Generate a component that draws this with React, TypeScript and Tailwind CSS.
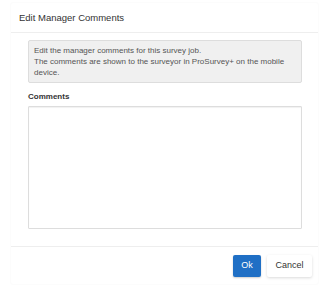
import React from "react";

const App = () => {
  return (
    <div className="w-[329px] h-[287px] bg-white pl-[10px] pt-[2px] font-['Liberation_Sans',Arial,sans-serif]">
      <div className="w-[309px] h-[283px] flex flex-col rounded-[3px] border border-[#fcfcfc]">
        {/* header */}
        <div className="h-[30px] shrink-0 flex items-center pl-[8px] border-b border-[#eeeeee]">
          <h2 className="text-[9.5px] text-[#333333] leading-none pt-[1px]">Edit Manager Comments</h2>
        </div>

        {/* body */}
        <div className="flex-1 flex flex-col pl-[17px] pr-[16px] pt-[7px]">
          <div className="border border-[#dddddd] bg-[#f0f0f0] rounded-[2px] px-[5px] pt-[4px] pb-[4px] text-[8px] leading-[11px] text-[#555555]">
            <p>Edit the manager comments for this survey job.</p>
            <p>The comments are shown to the surveyor in ProSurvey+ on the mobile device.</p>
          </div>

          <label className="mt-[9px] text-[8px] font-bold text-[#333333] leading-[10px]">Comments</label>
          <textarea className="mt-[4px] h-[123px] w-full resize-none border border-[#dddddd] rounded-[1px] shadow-[inset_0_1px_1px_rgba(0,0,0,0.06)] outline-none" />
        </div>

        {/* footer */}
        <div className="h-[38px] shrink-0 border-t border-[#eeeeee] flex justify-end items-start pt-[8px] pr-[6px] gap-[6px]">
          <button className="h-[22px] w-[28px] bg-[#1f6fc5] text-white text-[9px] rounded-[2px] shadow-[0_1px_2px_rgba(0,0,0,0.2)]">
            Ok
          </button>
          <button className="h-[22px] w-[45px] bg-white text-[#333333] text-[9px] rounded-[2px] shadow-[0_1px_3px_rgba(0,0,0,0.15)]">
            Cancel
          </button>
        </div>
      </div>
    </div>
  );
};

export default App;
